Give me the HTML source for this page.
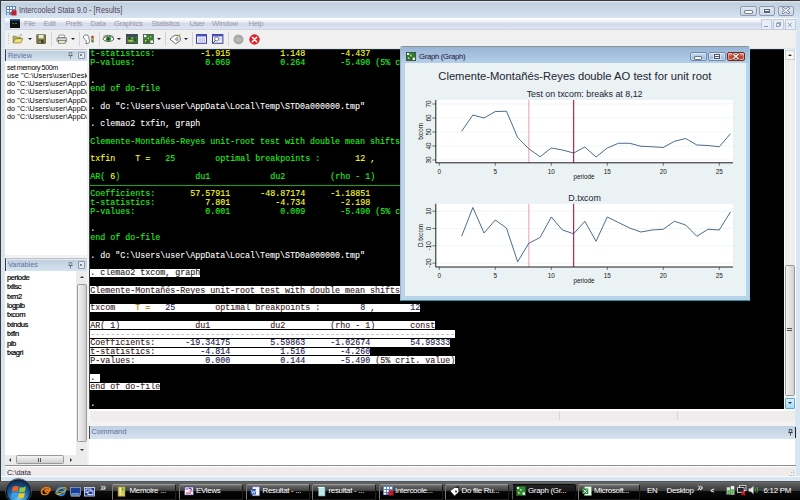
<!DOCTYPE html>
<html lang="en"><head><meta charset="utf-8"><title>Intercooled Stata 9.0 - [Results]</title>
<style>
*{box-sizing:border-box;margin:0;padding:0}
html,body{width:800px;height:500px;overflow:hidden}
body{position:relative;background:#f0f0f0;font-family:"Liberation Sans",sans-serif;font-size:7.5px;color:#000}
.abs{position:absolute}
.t{position:absolute;white-space:pre;line-height:1}
/* main window frame */
#frame{left:0;top:0;width:800px;height:481px;background:#d8e5f3;border-left:1px solid #3c3b3a;border-top:1px solid #3c3b39}
#desk{display:none}
#titlebar{left:1px;top:1px;width:799px;height:16.6px;background:linear-gradient(#dbe6f0 0,#d3dfeb 1px,#c0cfde 2.2px,#d7e3f0 100%)}
#title{left:18.8px;top:7.1px;font-size:8.2px;color:#54435f;transform:scaleX(.9);transform-origin:0 0}
.capbtn{position:absolute;top:6px;height:9.5px;width:16.5px;border:1px solid #8e9db4;border-radius:2px;background:linear-gradient(#dfe6f0,#c9d5e5)}
#menubar{left:5px;top:17.6px;width:791px;height:12.4px;background:linear-gradient(#fff 0,#fff 1.2px,#f5f7fb 1.8px,#e9ecf6 4.3px,#d3d9ec 5.2px,#dfe5f4 11.2px,#c8cddb 11.6px,#c8cddb 100%)}
.menu{position:absolute;top:20.2px;font-size:7.6px;color:#9a98a3;line-height:1;white-space:pre;letter-spacing:-.22px}
.mdibtn{position:absolute;top:18.5px;width:11px;height:11px;border:1px solid #c3cbdb;background:#e8eef7}
#toolbar{left:5px;top:30px;width:791px;height:18px;background:#f0f0f0}
.sep{position:absolute;top:32px;width:1px;height:14px;background:#d4d4d4}
.arr{position:absolute;top:38px;width:0;height:0;border-left:2px solid transparent;border-right:2px solid transparent;border-top:2.2px solid #222}
.phead{position:absolute;left:5px;width:82px;background:linear-gradient(#bccddd,#d6e3f0);border-top:1px solid #c0c0c0;border-left:1px solid #3a3a3a;box-shadow:inset 1px 1px 0 #e4e9f0}
.phead .t{left:2px;font-size:7.3px;color:#6274a0}
.pclose{position:absolute;left:71.5px;width:7px;height:7.5px;border:1px solid #8c97ad;background:#e6edf5;border-radius:1px}
.plist{position:absolute;left:5px;width:82px;background:#fff;overflow:hidden}
.rv{position:absolute;left:2px;font-size:7.2px;line-height:1;white-space:pre;color:#000;letter-spacing:-0.45px}
.vr{position:absolute;left:2px;font-size:7.6px;line-height:1;white-space:pre;color:#000;letter-spacing:-0.45px;-webkit-text-stroke:0.2px #000;margin-top:-.3px}
.sbtrack{position:absolute;background:#ececec}
.sbthumb{position:absolute;border:1px solid #9a9a9a;border-radius:1.5px;background:linear-gradient(90deg,#f4f4f4,#e2e2e2 50%,#cfcfcf)}
.sbthumbh{position:absolute;border:1px solid #9a9a9a;border-radius:1.5px;background:linear-gradient(#f4f4f4,#e2e2e2 50%,#cfcfcf)}
#res{font-family:"Liberation Mono",monospace}
.rl{position:absolute;white-space:pre;font-size:8.33px;line-height:8.75px;height:8.75px}
.cg{color:#22f022;-webkit-text-stroke:.1px #22f022}.cy{color:#ffff2a;-webkit-text-stroke:.1px #ffff2a}.cw{color:#fff;-webkit-text-stroke:.08px #fff}
.ck{color:#1c1c22}.cr{color:#38211c}.co{color:#a67c00}.cb{color:#1d2350}.cd{color:#a8a8a8}
.ck,.cr,.cb,.co{-webkit-text-stroke:.12px currentColor}
.sel{position:absolute;left:0;height:7.9px;background:#fff}
#gwin{left:400px;top:46px;width:350.2px;height:254.6px;background:#b9d3eb;border-left:1px solid #9fb0c4;border-top:1px solid #8e9298;border-right:1.1px solid #8fdcf8;border-bottom:1.1px solid #28909c;border-radius:2.5px 2.5px 0 0}
#gtitle{left:401px;top:47px;width:348px;height:16px;background:linear-gradient(#98b4d4,#b4cfea);border-radius:2px 2px 0 0}
#gcont{left:405px;top:63px;width:341px;height:232.5px;background:#eaf2f3}
.gbtn{position:absolute;top:52px;height:9px;width:17.5px;border:1px solid #7088ac;border-radius:2px;background:linear-gradient(#c9dbee,#b0c9e6 50%,#a0bcdc 55%,#aac5e3);box-shadow:inset 0 0 0 .7px rgba(255,255,255,.55)}
.gclose{background:linear-gradient(#e9a89a,#d4543c 45%,#c03a24 55%,#d8694c);border-color:#6a2a22}
#tb{left:0;top:480.6px;width:800px;height:19.4px;background:linear-gradient(#4c4c4c 0,#666 1.4px,#5a5a5a 3px,#3a3a3a 9.6px,#0c0c0c 10.3px,#000 100%)}
#orb{left:6.3px;top:479.3px;width:25.2px;height:25.2px;border-radius:50%;background:radial-gradient(circle at 50% 88%,#6fd0f4 0,#2f8bc6 30%,#1a4f86 58%,#10294c 85%,#0a1a30 100%);border:1.4px solid #0c1826;box-shadow:0 0 0 .8px #4a5866}
.tbtn{position:absolute;top:483.7px;height:16.6px;border:1px solid #1c1c1c;border-top-color:#999;border-left-color:#7a7a7a;border-radius:2px 2px 0 0;background:linear-gradient(#7a7a7a 0,#626262 1.2px,#3e3e3e 5.8px,#060606 6.6px,#000 100%)}
.tbtn.act{border-color:#0a0a0a;border-left-color:#555;background:linear-gradient(#222 0,#161616 6px,#000 7px,#000 100%)}
.tl{position:absolute;top:487.2px;font-size:7.9px;line-height:1;color:#fff;white-space:pre;letter-spacing:-.28px}
.rv.w{letter-spacing:.12px}
.tri{position:absolute;width:0;height:0}
.tri.u{border-left:2px solid transparent;border-right:2px solid transparent;border-bottom:2.4px solid #333}
.tri.d{border-left:2px solid transparent;border-right:2px solid transparent;border-top:2.4px solid #333}
.tri.l{border-top:2px solid transparent;border-bottom:2px solid transparent;border-right:2.4px solid #333}
.tri.r{border-top:2px solid transparent;border-bottom:2px solid transparent;border-left:2.4px solid #333}

</style></head>
<body>
<div id="desk" class="abs"></div>
<div id="frame" class="abs"></div>
<div id="titlebar" class="abs"></div>
<svg class="abs" style="left:6px;top:6px" width="11" height="10" viewBox="0 0 11 10"><rect x="0" y="0" width="10" height="9" fill="#5f86c4"/><rect x="1" y="1" width="2" height="2" fill="#fff"/><rect x="4" y="1" width="2" height="2" fill="#fff"/><rect x="7" y="1" width="2" height="2" fill="#fff"/><rect x="1" y="4" width="2" height="2" fill="#fff"/><rect x="4" y="4" width="2" height="2" fill="#fff"/><rect x="1" y="7" width="2" height="1.5" fill="#fff"/><rect x="5.5" y="4.5" width="5" height="5" fill="#c0202a"/></svg>
<div id="title" class="t">Intercooled Stata 9.0 - [Results]</div>
<div class="capbtn" style="left:740px"><div class="abs" style="left:4px;top:4.4px;width:6.6px;height:2px;background:#fff;border-radius:.6px;box-shadow:0 0 0 .8px #5a6580"></div></div>
<div class="capbtn" style="left:758.5px"><div class="abs" style="left:4.8px;top:1.5px;width:5.6px;height:4.6px;background:linear-gradient(#fff 0,#fff 1.2px,#565f74 1.2px,#565f74 2.2px,#fff 2.2px);border:.9px solid #565f74;box-shadow:0 0 0 .6px #eef2f8"></div></div>
<div class="capbtn" style="left:777.5px"><svg class="abs" style="left:3.7px;top:0.4px" width="7.6" height="6.8" viewBox="0 0 7.6 6.8"><path d="M1.2 1.2L6.4 5.6M6.4 1.2L1.2 5.6" stroke="#5a6580" stroke-width="2.5" fill="none" stroke-linecap="square"/><path d="M1.2 1.2L6.4 5.6M6.4 1.2L1.2 5.6" stroke="#fbfcfe" stroke-width="1.3" fill="none" stroke-linecap="square"/></svg></div>
<div id="menubar" class="abs"></div>
<svg class="abs" style="left:10px;top:19px" width="10" height="9" viewBox="0 0 10 9"><rect width="10" height="9" fill="#111"/><rect width="10" height="1.6" fill="#2a58c8"/><rect x="2" y="4" width="2" height="1" fill="#2c8a3a"/><rect x="5" y="4" width="2" height="1" fill="#2c8a3a"/></svg>
<div class="menu" style="left:24px">File</div>
<div class="menu" style="left:43.5px">Edit</div>
<div class="menu" style="left:65.5px">Prefs</div>
<div class="menu" style="left:90.5px">Data</div>
<div class="menu" style="left:114px">Graphics</div>
<div class="menu" style="left:151.5px">Statistics</div>
<div class="menu" style="left:189.5px">User</div>
<div class="menu" style="left:212px">Window</div>
<div class="menu" style="left:248.5px">Help</div>
<div class="mdibtn" style="left:760.5px"><div class="abs" style="left:2.5px;top:6px;width:4px;height:1.2px;background:#8d97ab"></div></div>
<div class="mdibtn" style="left:772.5px"><div class="abs" style="left:3px;top:2px;width:4px;height:4px;border:1px solid #9aa3b5;border-top-width:1.5px"></div><div class="abs" style="left:2px;top:3.5px;width:4px;height:4px;border:1px solid #9aa3b5;background:#e8eef7;border-top-width:1.5px"></div></div>
<div class="mdibtn" style="left:784.5px"><svg class="abs" style="left:1.8px;top:2px" width="5.6" height="5.6" viewBox="0 0 5.6 5.6"><path d="M1.2 1.2L4.4 4.4M4.4 1.2L1.2 4.4" stroke="#8b95aa" stroke-width="0.9" fill="none" stroke-linecap="square"/></svg></div>
<div id="toolbar" class="abs"></div>
<!-- toolbar icons -->
<div class="abs" style="left:7.5px;top:33px;width:1.5px;height:11px;background:repeating-linear-gradient(#c2c2c2 0 1.2px,#f0f0f0 1.2px 2.4px)"></div>
<svg class="abs" style="left:12px;top:33px" width="12" height="12" viewBox="0 0 12 12"><path d="M1 3.2h3.2l1 1.1h3.6v1.4H3.2L1.3 9.8z" fill="#c9b94a" stroke="#6b6430" stroke-width=".6"/><path d="M3.2 5.7h7.6L8.9 9.9H1.2z" fill="#f1e36d" stroke="#6b6430" stroke-width=".6"/><path d="M7.4 2.4c1-.9 2.1-.8 2.8.1" fill="none" stroke="#555" stroke-width=".6"/></svg>
<div class="arr" style="left:27.5px"></div>
<svg class="abs" style="left:35.5px;top:34px" width="11" height="11" viewBox="0 0 11 11"><rect x=".8" y=".8" width="8.8" height="8.8" fill="#7d7a36" stroke="#4a4826" stroke-width=".6"/><rect x="2.6" y="1" width="5" height="3.4" fill="#e9e9e4"/><rect x="2.8" y="6" width="4.6" height="3.4" fill="#3f3d22"/><rect x="3.4" y="6.6" width="1.2" height="2.4" fill="#d7d7cf"/></svg>
<div class="sep" style="left:51px"></div>
<svg class="abs" style="left:55.5px;top:33.5px" width="12" height="11" viewBox="0 0 12 11"><path d="M3.2 1h5l1 2.6H2.4z" fill="#fff" stroke="#555" stroke-width=".6"/><rect x="1" y="3.8" width="9.6" height="3.8" rx=".6" fill="#d9d9d9" stroke="#4c4c4c" stroke-width=".6"/><rect x="2.4" y="6.4" width="6.8" height="2.8" fill="#f4f0c0" stroke="#4c4c4c" stroke-width=".6"/></svg>
<div class="arr" style="left:70.5px"></div>
<div class="sep" style="left:78.5px"></div>
<svg class="abs" style="left:82px;top:33.5px" width="13" height="12" viewBox="0 0 13 12"><path d="M3.2 1.2c2.2-.8 3.8.4 3.6 2.4-.2 1.600 1 2.200.6 4.200-.3 1.500-2 2.300-3.700 1.700.9-.7 1-1.800.4-2.800C3.300 5.300 1.600 4.600 1.400 3.200 1.300 2.200 2.100 1.500 3.200 1.200z" fill="#fff" stroke="#444" stroke-width=".7"/><rect x="9.400" y="1.800" width="2.200" height="6.600" rx=".6" fill="#555"/><circle cx="10.500" cy="3" r=".9" fill="#e03a2a"/><circle cx="10.500" cy="5.100" r=".9" fill="#e6c62a"/><circle cx="10.500" cy="7.200" r=".9" fill="#3fae3a"/></svg>
<div class="sep" style="left:98.500px"></div>
<svg class="abs" style="left:102px;top:33.500px" width="13" height="10" viewBox="0 0 13 10"><path d="M.8 5C3 1.400 9.800 1.400 12 5 9.800 8.400 3 8.400.8 5z" fill="#f4f4f4" stroke="#444" stroke-width=".8"/><circle cx="6.400" cy="5" r="2.500" fill="#2d8a2d"/><circle cx="6.400" cy="5" r="1" fill="#0f3d12"/><path d="M1 3.300C3.400.600 9.400.600 11.800 3.300" fill="none" stroke="#444" stroke-width=".7"/></svg>
<div class="arr" style="left:117.400px"></div>
<svg class="abs" style="left:126px;top:34px" width="12" height="10" viewBox="0 0 12 10"><rect x=".4" y=".4" width="11" height="9.200" fill="#3f7a3a" stroke="#333a44" stroke-width=".8"/><rect x=".8" y=".8" width="10.200" height="1.800" fill="#39406a"/><rect x="2.400" y="3.600" width="2.200" height="1.200" fill="#1c2a1c"/><rect x="5.600" y="3.600" width="1.200" height="1.200" fill="#e2d84a"/><rect x="8" y="3.400" width="2.200" height="3.800" fill="#2a5a28"/><rect x="2.400" y="6.200" width="4.800" height="1.400" fill="#d8cf4c"/></svg>
<svg class="abs" style="left:142.500px;top:34px" width="11" height="10" viewBox="0 0 11 10"><rect x=".4" y=".4" width="10" height="9.200" fill="#3c7c38" stroke="#3a4a3a" stroke-width=".7"/><rect x="1" y="1" width="2.400" height="2.200" fill="#f2f2f2"/><rect x="7.400" y="6.400" width="2.600" height="2.600" fill="#f2f2f2"/><rect x="4.600" y="3.600" width="1.400" height="1.400" fill="#e2d84a"/><rect x="2" y="6" width="1.400" height="1.400" fill="#e2d84a"/><rect x="7" y="2" width="1.400" height="1.400" fill="#9bd07a"/><rect x="4.400" y="6.800" width="1.600" height="1.600" fill="#245a22"/></svg>
<div class="arr" style="left:156.500px"></div>
<div class="sep" style="left:164.500px"></div>
<svg class="abs" style="left:168.500px;top:33px" width="13" height="12" viewBox="0 0 13 12"><path d="M1 6.200L5.400 2.400h5.200l.8 5L6.600 10.800z" fill="#fff" stroke="#444" stroke-width=".8"/><path d="M5.600 6.600l4-3.400" stroke="#555" stroke-width=".7"/><path d="M9.400 2.800l1.600-1.600" stroke="#d8c62c" stroke-width="1.200"/><circle cx="8" cy="6.600" r="1.300" fill="#bbb" stroke="#666" stroke-width=".4"/></svg>
<div class="arr" style="left:183.800px"></div>
<div class="sep" style="left:191.500px"></div>
<svg class="abs" style="left:196px;top:34px" width="11" height="10" viewBox="0 0 11 10"><rect x=".5" y=".5" width="10" height="8.800" fill="#f7f7fb" stroke="#3a3f9c" stroke-width="1"/><rect x=".5" y=".5" width="10" height="2" fill="#4a55c8"/><path d="M3 3.500v4.600M4.800 3.500v4.600M6.600 3.500v4.600M8.400 3.500v4.600" stroke="#8f97d8" stroke-width=".7"/></svg>
<svg class="abs" style="left:212px;top:34px" width="11.500" height="10" viewBox="0 0 11.500 10"><rect x=".5" y=".5" width="10.400" height="8.800" fill="#f7f7fb" stroke="#3a3f9c" stroke-width="1"/><rect x=".5" y=".5" width="10.400" height="2" fill="#4a55c8"/><circle cx="4.600" cy="5" r="2" fill="#fff" stroke="#444" stroke-width=".7"/><path d="M3.200 6.600L1.400 8.600" stroke="#333" stroke-width="1"/><path d="M7.200 4.400h2.600M7.200 6h2.600" stroke="#8f97d8" stroke-width=".6"/></svg>
<div class="sep" style="left:227.500px"></div>
<svg class="abs" style="left:232.500px;top:33.500px" width="11" height="11" viewBox="0 0 11 11"><circle cx="5.500" cy="5.500" r="5" fill="#a9a9a9"/><circle cx="4.600" cy="5.500" r="1.300" fill="none" stroke="#c9c9c9" stroke-width=".7"/><circle cx="6.600" cy="5.500" r="1.300" fill="none" stroke="#c9c9c9" stroke-width=".7"/></svg>
<svg class="abs" style="left:248.700px;top:33.500px" width="11" height="11" viewBox="0 0 11 11"><circle cx="5.500" cy="5.500" r="5" fill="#e8242c"/><circle cx="5.500" cy="5.500" r="4.700" fill="none" stroke="#b01018" stroke-width=".5"/><path d="M3.300 3.300l4.400 4.400M7.700 3.300l-4.400 4.400" stroke="#fff" stroke-width="1.500" stroke-linecap="round"/></svg>
<!-- Review panel -->
<div class="abs" style="left:5px;top:48px;width:84px;height:417px;background:#f0f2f5"></div>
<div class="phead" style="top:49px;height:12.3px"><div class="t" style="top:2px">Review</div>
<svg class="abs" style="left:62px;top:2px" width="5" height="7" viewBox="0 0 5 7"><path d="M1.200.5h2.600v3H1.200zM.3 3.600h4.400M2.500 3.600v3" fill="none" stroke="#555" stroke-width=".6"/></svg>
<div class="pclose" style="top:1.500px"><svg class="abs" style="left:0.6px;top:0.8px" width="4" height="4" viewBox="0 0 4 4"><path d="M1.2 1.2L2.8 2.8M2.8 1.2L1.2 2.8" stroke="#555" stroke-width="0.7" fill="none" stroke-linecap="square"/></svg></div></div>
<div class="plist" style="top:61px;height:193.500px">
<div class="rv" style="top:3.1px">set memory 500m</div>
<div class="rv w" style="top:11.2px">use "C:\Users\user\Desktop\memoire\data.dta", clear</div>
<div class="rv w" style="top:19.3px">do "C:\Users\user\AppData\Local\Temp\STD0a000000.tmp"</div>
<div class="rv w" style="top:27.4px">do "C:\Users\user\AppData\Local\Temp\STD0a000000.tmp"</div>
<div class="rv w" style="top:35.5px">do "C:\Users\user\AppData\Local\Temp\STD0a000000.tmp"</div>
<div class="rv w" style="top:43.6px">do "C:\Users\user\AppData\Local\Temp\STD0a000000.tmp"</div>
<div class="rv w" style="top:51.7px">do "C:\Users\user\AppData\Local\Temp\STD0a000000.tmp"</div>
</div>
<!-- Variables panel -->
<div class="phead" style="top:258.3px;height:12.7px"><div class="t" style="top:2.1px">Variables</div>
<svg class="abs" style="left:62px;top:2.500px" width="5" height="7" viewBox="0 0 5 7"><path d="M1.200.5h2.600v3H1.200zM.3 3.600h4.400M2.500 3.600v3" fill="none" stroke="#555" stroke-width=".6"/></svg>
<div class="pclose" style="top:2px"><svg class="abs" style="left:0.6px;top:0.8px" width="4" height="4" viewBox="0 0 4 4"><path d="M1.2 1.2L2.8 2.8M2.8 1.2L1.2 2.8" stroke="#555" stroke-width="0.7" fill="none" stroke-linecap="square"/></svg></div></div>
<div class="plist" style="top:271px;height:194px">
<div class="vr" style="top:3.2px">periode</div>
<div class="vr" style="top:12.6px">txlisc</div>
<div class="vr" style="top:22.0px">txm2</div>
<div class="vr" style="top:31.3px">logpib</div>
<div class="vr" style="top:40.7px">txcom</div>
<div class="vr" style="top:50.1px">txindus</div>
<div class="vr" style="top:59.5px">txfin</div>
<div class="vr" style="top:68.8px">pib</div>
<div class="vr" style="top:78.2px">txagri</div>
</div>
<!-- variables v-scrollbar -->
<div class="sbtrack" style="left:76px;top:271px;width:11px;height:184px"></div>
<div class="tri u" style="left:79.5px;top:276px"></div>
<div class="sbthumb" style="left:76.500px;top:284px;width:10px;height:158px"></div>
<div class="tri d" style="left:79.5px;top:448.5px"></div>
<!-- variables h-scrollbar -->
<div class="sbtrack" style="left:5px;top:455px;width:82px;height:9.500px"></div>
<div class="tri l" style="left:9px;top:457.7px"></div>
<div class="sbthumbh" style="left:16px;top:455px;width:47.500px;height:9.2px"><div class="abs" style="left:21px;top:2.4px;width:4.500px;height:3.500px;background:repeating-linear-gradient(90deg,#555 0 .8px,transparent .8px 1.800px)"></div></div>
<div class="tri r" style="left:69.5px;top:457.7px"></div>
<!-- Results pane -->
<div class="abs" style="left:89px;top:48.5px;width:695px;height:360.5px;background:#000;border-left:1px solid #3a3a3a;border-top:1px solid #2a2a2a"></div>
<div id="res" class="abs" style="left:90.2px;top:50.4px;width:694px;height:360px;overflow:hidden">
<div class="rl cg" style="left:0px;top:0.00px">t-statistics:</div>
<div class="rl cy" style="left:110px;top:0.00px">-1.915</div>
<div class="rl cy" style="left:190px;top:0.00px">1.148</div>
<div class="rl cy" style="left:250px;top:0.00px">-4.437</div>
<div class="rl cg" style="left:0px;top:8.75px">P-values:</div>
<div class="rl cg" style="left:115px;top:8.75px">0.069</div>
<div class="rl cg" style="left:190px;top:8.75px">0.264</div>
<div class="rl cg" style="left:250px;top:8.75px">-5.490</div>
<div class="rl cg" style="left:280px;top:8.75px"> (5% crit. value)</div>
<div class="rl cw" style="left:0px;top:26.25px">.</div>
<div class="rl cg" style="left:0px;top:35.00px">end of do-file</div>
<div class="rl cw" style="left:0px;top:52.50px">. do "C:\Users\user\AppData\Local\Temp\STD0a000000.tmp"</div>
<div class="rl cw" style="left:0px;top:70.00px">. clemao2 txfin, graph</div>
<div class="rl cg" style="left:0px;top:87.50px">Clemente-Montañés-Reyes unit-root test with double mean shifts, AO model</div>
<div class="rl cy" style="left:0px;top:105.00px">txfin</div>
<div class="rl cy" style="left:45px;top:105.00px">T =</div>
<div class="rl cg" style="left:75px;top:105.00px">25</div>
<div class="rl cg" style="left:125px;top:105.00px">optimal breakpoints :</div>
<div class="rl cy" style="left:265px;top:105.00px">12</div>
<div class="rl cy" style="left:280px;top:105.00px">,</div>
<div class="rl cy" style="left:320px;top:105.00px">16</div>
<div class="rl cg" style="left:0px;top:122.50px">AR(</div>
<div class="rl cy" style="left:20px;top:122.50px">6</div>
<div class="rl cg" style="left:25px;top:122.50px">)</div>
<div class="rl cg" style="left:105px;top:122.50px">du1</div>
<div class="rl cg" style="left:180px;top:122.50px">du2</div>
<div class="rl cg" style="left:240px;top:122.50px">(rho - 1)</div>
<div class="rl cg" style="left:320px;top:122.50px">const</div>
<div class="rl cg" style="left:0px;top:140.00px">Coefficients:</div>
<div class="rl cy" style="left:100px;top:140.00px">57.57911</div>
<div class="rl cy" style="left:170px;top:140.00px">-48.87174</div>
<div class="rl cy" style="left:240px;top:140.00px">-1.18851</div>
<div class="rl cy" style="left:320px;top:140.00px">38.10284</div>
<div class="rl cg" style="left:0px;top:148.75px">t-statistics:</div>
<div class="rl cy" style="left:115px;top:148.75px">7.801</div>
<div class="rl cy" style="left:185px;top:148.75px">-4.734</div>
<div class="rl cy" style="left:250px;top:148.75px">-2.198</div>
<div class="rl cg" style="left:0px;top:157.50px">P-values:</div>
<div class="rl cg" style="left:115px;top:157.50px">0.001</div>
<div class="rl cg" style="left:190px;top:157.50px">0.009</div>
<div class="rl cg" style="left:250px;top:157.50px">-5.490</div>
<div class="rl cg" style="left:280px;top:157.50px"> (5% crit. value)</div>
<div class="rl cw" style="left:0px;top:175.00px">.</div>
<div class="rl cg" style="left:0px;top:183.75px">end of do-file</div>
<div class="rl cw" style="left:0px;top:201.25px">. do "C:\Users\user\AppData\Local\Temp\STD0a000000.tmp"</div>
<div class="abs" style="left:0;top:134.85px;width:365px;height:.7px;background:#12a812"></div>
<div class="sel" style="top:218.40px;width:110px"></div>
<div class="rl ck" style="left:0px;top:218.75px">. clemao2 txcom, graph</div>
<div class="sel" style="top:235.90px;width:360px"></div>
<div class="rl cr" style="left:0px;top:236.25px">Clemente-Montañés-Reyes unit-root test with double mean shifts, AO model</div>
<div class="sel" style="top:253.40px;width:330px"></div>
<div class="rl cr" style="left:0px;top:253.75px">txcom</div>
<div class="rl co" style="left:45px;top:253.75px">T =</div>
<div class="rl cb" style="left:75px;top:253.75px">25</div>
<div class="rl cr" style="left:125px;top:253.75px">optimal breakpoints :</div>
<div class="rl cb" style="left:270px;top:253.75px">8</div>
<div class="rl cb" style="left:280px;top:253.75px">,</div>
<div class="rl cb" style="left:320px;top:253.75px">12</div>
<div class="sel" style="top:270.90px;width:345px"></div>
<div class="rl cr" style="left:0px;top:271.25px">AR(</div>
<div class="rl cb" style="left:20px;top:271.25px">1</div>
<div class="rl cr" style="left:25px;top:271.25px">)</div>
<div class="rl cr" style="left:105px;top:271.25px">du1</div>
<div class="rl cr" style="left:180px;top:271.25px">du2</div>
<div class="rl cr" style="left:240px;top:271.25px">(rho - 1)</div>
<div class="rl cr" style="left:320px;top:271.25px">const</div>
<div class="sel" style="top:288.40px;width:360px"></div>
<div class="rl cr" style="left:0px;top:288.75px">Coefficients:</div>
<div class="rl cb" style="left:95px;top:288.75px">-19.34175</div>
<div class="rl cb" style="left:180px;top:288.75px">5.59863</div>
<div class="rl cb" style="left:240px;top:288.75px">-1.02674</div>
<div class="rl cb" style="left:320px;top:288.75px">54.99333</div>
<div class="sel" style="top:297.15px;width:280px"></div>
<div class="rl cr" style="left:0px;top:297.50px">t-statistics:</div>
<div class="rl cb" style="left:110px;top:297.50px">-4.814</div>
<div class="rl cb" style="left:190px;top:297.50px">1.516</div>
<div class="rl cb" style="left:250px;top:297.50px">-4.260</div>
<div class="sel" style="top:305.90px;width:365px"></div>
<div class="rl cr" style="left:0px;top:306.25px">P-values:</div>
<div class="rl cb" style="left:115px;top:306.25px">0.000</div>
<div class="rl cb" style="left:190px;top:306.25px">0.144</div>
<div class="rl cb" style="left:250px;top:306.25px">-5.490</div>
<div class="rl cr" style="left:280px;top:306.25px"> (5% crit. value)</div>
<div class="sel" style="top:323.40px;width:10px"></div>
<div class="rl ck" style="left:0px;top:323.75px">.</div>
<div class="sel" style="top:332.15px;width:70px"></div>
<div class="rl cr" style="left:0px;top:332.50px">end of do-file</div>
<div class="sel" style="top:279.65px;width:365px"></div>
<div class="rl cd" style="left:0;top:280.80px">-------------------------------------------------------------------------</div>
<div class="rl cw" style="left:0;top:350.00px">.</div>
</div>
<div class="sbtrack" style="left:784px;top:49px;width:12px;height:360px;background:linear-gradient(90deg,#fff 0,#fff 1px,#e9e9e9 1.3px,#f0f0f0 5px,#f0f0f0 9px,#e4e4e4 10.4px,#fff 10.8px,#fff 12px)"></div>
<div class="abs" style="left:784.5px;top:49.5px;width:10px;height:10px;border:1px solid #d0d0d0;background:#f4f4f4"></div>
<div class="tri u" style="left:787.5px;top:53.5px"></div>
<div class="sbthumb" style="left:784.5px;top:264.5px;width:10px;height:131px"></div>
<div class="abs" style="left:787px;top:328px;width:4.5px;height:4px;background:repeating-linear-gradient(#555 0 .8px,transparent .8px 1.8px)"></div>
<div class="abs" style="left:784.5px;top:397.5px;width:10px;height:11px;border:1px solid #5fa8d8;background:linear-gradient(#d9effc,#a9daf5);border-radius:1px"></div>
<div class="tri d" style="left:787.5px;top:402.3px"></div>
<!-- Graph window -->
<div id="gwin" class="abs"></div>
<div id="gtitle" class="abs"></div>
<svg class="abs" style="left:406px;top:51.5px" width="10" height="9" viewBox="0 0 10 9"><rect x=".3" y=".3" width="9.4" height="8.4" fill="#2f7a35" stroke="#2a3a2a" stroke-width=".6"/><rect x="1" y="1" width="2.2" height="2" fill="#f2f2f2"/><rect x="6.6" y="5.6" width="2.4" height="2.4" fill="#f2f2f2"/><rect x="4" y="2.6" width="1.8" height="1.8" fill="#9bd07a"/><rect x="2" y="5.4" width="1.6" height="1.6" fill="#e2d84a"/><rect x="4.400" y="5.800" width="1.400" height="1.400" fill="#173f18"/></svg>
<div class="t" style="left:419px;top:53.2px;font-size:7.7px;letter-spacing:-.28px;color:#1a1038">Graph (Graph)</div>
<div class="gbtn" style="left:689.5px"><div class="abs" style="left:4.3px;top:4px;width:6.4px;height:2px;background:#fff;border-radius:.6px;box-shadow:0 0 0 .8px #4c5872"></div></div>
<div class="gbtn" style="left:708px"><div class="abs" style="left:5.2px;top:1.3px;width:5.6px;height:4.6px;background:linear-gradient(#fff 0,#fff 1.2px,#4a5570 1.2px,#4a5570 2.2px,#fff 2.2px);border:.9px solid #4a5570;box-shadow:0 0 0 .6px #e8eef6"></div></div>
<div class="gbtn gclose" style="left:727px"><svg class="abs" style="left:4.2px;top:0.2px" width="7.6" height="6.8" viewBox="0 0 7.6 6.8"><path d="M1.2 1.2L6.4 5.6M6.4 1.2L1.2 5.6" stroke="#6a2018" stroke-width="2.5" fill="none" stroke-linecap="square"/><path d="M1.2 1.2L6.4 5.6M6.4 1.2L1.2 5.6" stroke="#ffffff" stroke-width="1.3" fill="none" stroke-linecap="square"/></svg></div>
<div id="gcont" class="abs"></div>
<svg class="abs" style="left:405px;top:63px" width="341" height="232.5" viewBox="0 0 341 232.5" font-family="Liberation Sans, sans-serif">
<text x="169.8" y="16.6" font-size="11.3" text-anchor="middle" fill="#1c2434" textLength="273" lengthAdjust="spacingAndGlyphs">Clemente-Montañés-Reyes double AO test for unit root</text>
<rect x="30.50" y="37.00" width="297.50" height="62.80" fill="#fff"/>
<line x1="30.50" x2="328.00" y1="41.00" y2="41.00" stroke="#e9f0f2" stroke-width=".7"/>
<line x1="30.50" x2="328.00" y1="55.00" y2="55.00" stroke="#e9f0f2" stroke-width=".7"/>
<line x1="30.50" x2="328.00" y1="69.00" y2="69.00" stroke="#e9f0f2" stroke-width=".7"/>
<line x1="30.50" x2="328.00" y1="83.00" y2="83.00" stroke="#e9f0f2" stroke-width=".7"/>
<line x1="30.50" x2="328.00" y1="97.00" y2="97.00" stroke="#e9f0f2" stroke-width=".7"/>
<line x1="123.85" x2="123.85" y1="37.00" y2="99.80" stroke="#eda6b8" stroke-width="1.1"/>
<line x1="168.65" x2="168.65" y1="37.00" y2="99.80" stroke="#b3123a" stroke-width="1.1"/>
<polyline points="56.65,68.25 67.85,52.00 79.05,55.00 90.25,48.50 101.45,48.25 112.65,74.50 123.85,85.75 135.05,93.75 146.25,85.00 157.45,87.00 168.65,90.00 179.85,84.00 191.05,94.00 202.25,85.00 213.45,80.25 224.65,80.25 235.85,83.25 247.05,83.75 258.25,84.50 269.45,78.25 280.65,75.50 291.85,82.00 303.05,82.50 314.25,83.75 325.45,70.75" fill="none" stroke="#1f4670" stroke-width=".8" stroke-linejoin="round"/>
<path d="M30.80 37.00V99.80H328.00" fill="none" stroke="#111" stroke-width=".95"/>
<line x1="27.30" x2="30.80" y1="41.00" y2="41.00" stroke="#222" stroke-width=".6"/>
<text transform="translate(26.20 41.00) rotate(-90)" font-size="6.4" text-anchor="middle" fill="#222">70</text>
<line x1="27.30" x2="30.80" y1="55.00" y2="55.00" stroke="#222" stroke-width=".6"/>
<text transform="translate(26.20 55.00) rotate(-90)" font-size="6.4" text-anchor="middle" fill="#222">60</text>
<line x1="27.30" x2="30.80" y1="69.00" y2="69.00" stroke="#222" stroke-width=".6"/>
<text transform="translate(26.20 69.00) rotate(-90)" font-size="6.4" text-anchor="middle" fill="#222">50</text>
<line x1="27.30" x2="30.80" y1="83.00" y2="83.00" stroke="#222" stroke-width=".6"/>
<text transform="translate(26.20 83.00) rotate(-90)" font-size="6.4" text-anchor="middle" fill="#222">40</text>
<line x1="27.30" x2="30.80" y1="97.00" y2="97.00" stroke="#222" stroke-width=".6"/>
<text transform="translate(26.20 97.00) rotate(-90)" font-size="6.4" text-anchor="middle" fill="#222">30</text>
<line x1="34.25" x2="34.25" y1="99.80" y2="102.80" stroke="#222" stroke-width=".6"/>
<text x="34.25" y="111.00" font-size="6.4" text-anchor="middle" fill="#222">0</text>
<line x1="90.25" x2="90.25" y1="99.80" y2="102.80" stroke="#222" stroke-width=".6"/>
<text x="90.25" y="111.00" font-size="6.4" text-anchor="middle" fill="#222">5</text>
<line x1="146.25" x2="146.25" y1="99.80" y2="102.80" stroke="#222" stroke-width=".6"/>
<text x="146.25" y="111.00" font-size="6.4" text-anchor="middle" fill="#222">10</text>
<line x1="202.25" x2="202.25" y1="99.80" y2="102.80" stroke="#222" stroke-width=".6"/>
<text x="202.25" y="111.00" font-size="6.4" text-anchor="middle" fill="#222">15</text>
<line x1="258.25" x2="258.25" y1="99.80" y2="102.80" stroke="#222" stroke-width=".6"/>
<text x="258.25" y="111.00" font-size="6.4" text-anchor="middle" fill="#222">20</text>
<line x1="314.25" x2="314.25" y1="99.80" y2="102.80" stroke="#222" stroke-width=".6"/>
<text x="314.25" y="111.00" font-size="6.4" text-anchor="middle" fill="#222">25</text>
<text x="179.00" y="115.50" font-size="6.3" text-anchor="middle" fill="#111">periode</text>
<text transform="translate(17.80 68.40) rotate(-90)" font-size="6.3" text-anchor="middle" fill="#111">txcom</text>
<text x="179.60" y="33.50" font-size="8.9" text-anchor="middle" fill="#1c2434">Test on txcom: breaks at 8,12</text>
<rect x="30.50" y="140.75" width="297.50" height="63.25" fill="#fff"/>
<line x1="30.50" x2="328.00" y1="148.20" y2="148.20" stroke="#e9f0f2" stroke-width=".7"/>
<line x1="30.50" x2="328.00" y1="165.50" y2="165.50" stroke="#e9f0f2" stroke-width=".7"/>
<line x1="30.50" x2="328.00" y1="182.80" y2="182.80" stroke="#e9f0f2" stroke-width=".7"/>
<line x1="30.50" x2="328.00" y1="200.10" y2="200.10" stroke="#e9f0f2" stroke-width=".7"/>
<line x1="123.85" x2="123.85" y1="140.75" y2="204.00" stroke="#eda6b8" stroke-width="1.1"/>
<line x1="168.65" x2="168.65" y1="140.75" y2="204.00" stroke="#b3123a" stroke-width="1.1"/>
<polyline points="56.65,173.25 67.85,144.50 79.05,170.00 90.25,157.00 101.45,165.00 112.65,198.75 123.85,180.25 135.05,174.50 146.25,154.00 157.45,167.00 168.65,170.75 179.85,158.25 191.05,178.25 202.25,154.00 213.45,159.50 224.65,165.00 235.85,169.00 247.05,167.00 258.25,166.25 269.45,158.25 280.65,162.00 291.85,173.25 303.05,166.25 314.25,167.00 325.45,149.00" fill="none" stroke="#1f4670" stroke-width=".8" stroke-linejoin="round"/>
<path d="M30.80 140.75V204.00H328.00" fill="none" stroke="#111" stroke-width=".95"/>
<line x1="27.30" x2="30.80" y1="148.20" y2="148.20" stroke="#222" stroke-width=".6"/>
<text transform="translate(26.20 148.20) rotate(-90)" font-size="6.4" text-anchor="middle" fill="#222">10</text>
<line x1="27.30" x2="30.80" y1="165.50" y2="165.50" stroke="#222" stroke-width=".6"/>
<text transform="translate(26.20 165.50) rotate(-90)" font-size="6.4" text-anchor="middle" fill="#222">0</text>
<line x1="27.30" x2="30.80" y1="182.80" y2="182.80" stroke="#222" stroke-width=".6"/>
<text transform="translate(26.20 182.80) rotate(-90)" font-size="6.4" text-anchor="middle" fill="#222">-10</text>
<line x1="27.30" x2="30.80" y1="200.10" y2="200.10" stroke="#222" stroke-width=".6"/>
<text transform="translate(26.20 200.10) rotate(-90)" font-size="6.4" text-anchor="middle" fill="#222">-20</text>
<line x1="34.25" x2="34.25" y1="204.00" y2="207.00" stroke="#222" stroke-width=".6"/>
<text x="34.25" y="215.20" font-size="6.4" text-anchor="middle" fill="#222">0</text>
<line x1="90.25" x2="90.25" y1="204.00" y2="207.00" stroke="#222" stroke-width=".6"/>
<text x="90.25" y="215.20" font-size="6.4" text-anchor="middle" fill="#222">5</text>
<line x1="146.25" x2="146.25" y1="204.00" y2="207.00" stroke="#222" stroke-width=".6"/>
<text x="146.25" y="215.20" font-size="6.4" text-anchor="middle" fill="#222">10</text>
<line x1="202.25" x2="202.25" y1="204.00" y2="207.00" stroke="#222" stroke-width=".6"/>
<text x="202.25" y="215.20" font-size="6.4" text-anchor="middle" fill="#222">15</text>
<line x1="258.25" x2="258.25" y1="204.00" y2="207.00" stroke="#222" stroke-width=".6"/>
<text x="258.25" y="215.20" font-size="6.4" text-anchor="middle" fill="#222">20</text>
<line x1="314.25" x2="314.25" y1="204.00" y2="207.00" stroke="#222" stroke-width=".6"/>
<text x="314.25" y="215.20" font-size="6.4" text-anchor="middle" fill="#222">25</text>
<text x="179.00" y="219.70" font-size="6.3" text-anchor="middle" fill="#111">periode</text>
<text transform="translate(17.80 172.38) rotate(-90)" font-size="6.3" text-anchor="middle" fill="#111">D.txcom</text>
<text x="179.60" y="138.05" font-size="8.9" text-anchor="middle" fill="#1c2434">D.txcom</text>
</svg>
<!-- results status strip -->
<div class="abs" style="left:89px;top:409.3px;width:706px;height:12px;background:#fdfdfd"></div>
<div class="abs" style="left:90px;top:411.4px;width:705px;height:9.8px;background:#f0eceb"></div>
<div class="abs" style="left:559px;top:411px;width:1px;height:9px;background:#d9d6d6"></div>
<div class="abs" style="left:677px;top:411px;width:1px;height:9px;background:#d9d6d6"></div>
<div class="abs" style="left:89px;top:421px;width:706px;height:5px;background:#f3f3f3"></div>
<!-- command pane -->
<div class="abs" style="left:89px;top:426px;width:706px;height:12.500px;background:linear-gradient(#c0d0e0,#d6e3f0);border-left:1px solid #4a4a4a"></div>
<div class="t" style="left:91.500px;top:428.400px;font-size:7.600px;color:#5f6f98">Command</div>
<svg class="abs" style="left:788px;top:428.500px" width="5" height="7" viewBox="0 0 5 7"><path d="M1.200.5h2.600v3H1.200zM.3 3.600h4.400M2.500 3.600v3" fill="none" stroke="#333" stroke-width=".8"/></svg>
<div class="abs" style="left:794.500px;top:427px;width:1px;height:11px;background:#222"></div>
<div class="abs" style="left:89px;top:438.500px;width:706px;height:26.500px;background:#fff"></div>
<!-- main status bar -->
<div class="abs" style="left:5px;top:464.7px;width:791px;height:1.1px;background:#8c8c8c"></div>
<div class="abs" style="left:5px;top:465.800px;width:791px;height:10.4px;background:linear-gradient(#fff 0,#fff .6px,#f0eceb .8px)"></div>
<div class="t" style="left:7px;top:469px;font-size:7.400px;color:#2a1c3c">C:\data</div>
<div class="abs" style="left:793px;top:474.5px;width:1.2px;height:1.2px;background:#b4b4b4"></div><div class="abs" style="left:790.8px;top:474.5px;width:1.2px;height:1.2px;background:#b4b4b4"></div><div class="abs" style="left:788.6px;top:474.5px;width:1.2px;height:1.2px;background:#b4b4b4"></div><div class="abs" style="left:793px;top:472.3px;width:1.2px;height:1.2px;background:#b4b4b4"></div><div class="abs" style="left:790.8px;top:472.3px;width:1.2px;height:1.2px;background:#b4b4b4"></div><div class="abs" style="left:793px;top:470.1px;width:1.2px;height:1.2px;background:#b4b4b4"></div>
<div class="abs" style="left:1px;top:476.2px;width:799px;height:.8px;background:#fbfbfc"></div>
<!-- taskbar -->
<div id="tb" class="abs"></div>
<div id="orb" class="abs"><svg class="abs" style="left:3.5px;top:4px" width="17" height="16" viewBox="0 0 17 16"><path d="M1.5 3.2Q4.5 1.2 7.6 2.6L6.8 7.6Q3.8 6.300 .9 8z" fill="#f0602a"/><path d="M8.800 2.900Q11.800 4.300 15 2.200L14 7.200Q11 9 8 7.800z" fill="#8ecb3c"/><path d="M.7 9.200Q3.600 7.500 6.600 8.800L5.800 13.600Q3 12.400 0 14z" fill="#3aa0ea"/><path d="M7.800 9Q10.800 10.300 13.800 8.400L13 13.300Q10 15 7 13.800z" fill="#f6c62c"/></svg></div>
<svg class="abs" style="left:40px;top:485px" width="12" height="12" viewBox="0 0 12 12"><path d="M2 8.500c-1.500-2.500 1-6 4.500-6s4.500 2.500 2.500 4-4.500.5-3.500-1 3-1 2.500 0" fill="none" stroke="#f07a10" stroke-width="1.700" stroke-linecap="round"/><path d="M2 9c2 1.200 5 .6 6.500-1" fill="none" stroke="#f0a020" stroke-width="1.200"/></svg>
<svg class="abs" style="left:55px;top:485px" width="12" height="12" viewBox="0 0 12 12"><circle cx="6" cy="6.500" r="3.800" fill="none" stroke="#2a8ae0" stroke-width="2"/><path d="M2.500 6.600h7" stroke="#2a8ae0" stroke-width="1.400"/><ellipse cx="6" cy="5.800" rx="5.600" ry="2.200" fill="none" stroke="#f0b020" stroke-width=".9" transform="rotate(-28 6 6)"/></svg>
<svg class="abs" style="left:69.500px;top:486.500px" width="11" height="10" viewBox="0 0 11 10"><rect x=".5" y=".5" width="10" height="7.500" fill="#1d3f94" stroke="#8aa0cc" stroke-width=".8"/><rect x="1.500" y="6" width="8" height="1.500" fill="#6a9ae0"/><rect x="1" y="8.500" width="9" height="1" fill="#ccd"/></svg>
<svg class="abs" style="left:84px;top:486.500px" width="11" height="10" viewBox="0 0 11 10"><rect x=".5" y=".5" width="10" height="8.500" fill="#1a3a9a" stroke="#c8d4f0" stroke-width=".9"/><rect x="2" y="2" width="5" height="3.500" fill="none" stroke="#fff" stroke-width=".8"/><rect x="4" y="4" width="5" height="3.500" fill="#1a3a9a" stroke="#fff" stroke-width=".8"/></svg>
<div class="t" style="left:100.3px;top:482.2px;font-size:10.5px;color:#fff">»</div>
<div class="tbtn" style="left:112px;width:64px"></div>
<div class="tbtn" style="left:179px;width:64px"></div>
<div class="tbtn" style="left:245.500px;width:64px"></div>
<div class="tbtn" style="left:312px;width:64px"></div>
<div class="tbtn" style="left:378.500px;width:64px"></div>
<div class="tbtn" style="left:445px;width:64px"></div>
<div class="tbtn act" style="left:511.500px;width:64px"></div>
<div class="tbtn" style="left:578px;width:62px"></div>
<!-- task icons -->
<svg class="abs" style="left:117px;top:486px" width="9" height="11" viewBox="0 0 9 11"><rect x="1" y=".8" width="7" height="9.500" fill="#d8c860" stroke="#8a7a2a" stroke-width=".6"/><path d="M5 1l2 3-2 .5z" fill="#3aa03a"/><rect x="2.500" y="2" width="1.500" height="7" fill="#f0e898"/></svg>
<svg class="abs" style="left:184px;top:486px" width="10" height="11" viewBox="0 0 10 11"><rect x=".5" y="1" width="9" height="8" fill="#f4f4fa" stroke="#3a3a7a" stroke-width=".7"/><path d="M1.500 3h3M5.500 5h3M2 7h5" stroke="#c02a6a" stroke-width="1.200"/><path d="M5 2l3 1.500" stroke="#2a3ab0" stroke-width="1.200"/></svg>
<svg class="abs" style="left:250px;top:486px" width="10" height="11" viewBox="0 0 10 11"><rect x="2.500" y=".8" width="7" height="9" fill="#f2f4fa" stroke="#6a7aa8" stroke-width=".6"/><rect x=".5" y="3" width="5.500" height="5.500" fill="#2a5ab8"/><path d="M1.500 4.200l1 3.200 1-2.400 1 2.400 1-3.200" fill="none" stroke="#fff" stroke-width=".7"/></svg>
<svg class="abs" style="left:317px;top:486px" width="9" height="11" viewBox="0 0 9 11"><path d="M1.500 1h5.500l1 1v8H1.500z" fill="#bfe6ea" stroke="#6a9aa0" stroke-width=".6"/><path d="M1 1.500h6.500" stroke="#e8f8fa" stroke-width="1"/></svg>
<svg class="abs" style="left:383px;top:486px" width="11" height="10" viewBox="0 0 11 10"><rect x="0" y="0" width="10" height="9" fill="#5f86c4"/><rect x="1" y="1" width="2" height="2" fill="#fff"/><rect x="4" y="1" width="2" height="2" fill="#fff"/><rect x="7" y="1" width="2" height="2" fill="#fff"/><rect x="1" y="4" width="2" height="2" fill="#fff"/><rect x="4" y="4" width="2" height="2" fill="#fff"/><rect x="1" y="7" width="2" height="1.500" fill="#fff"/><rect x="5.500" y="4.500" width="5" height="5" fill="#c0202a"/></svg>
<svg class="abs" style="left:449px;top:485.500px" width="11" height="11" viewBox="0 0 11 11"><path d="M1 5L5.500 1.500h4l.5 4.500L5.500 10z" fill="#fff" stroke="#222" stroke-width=".8"/><path d="M7 1l2-1 1 2" fill="#111"/><circle cx="7" cy="5.500" r="1" fill="#333"/></svg>
<svg class="abs" style="left:516px;top:486px" width="10" height="10" viewBox="0 0 10 10"><rect x=".3" y=".3" width="9.400" height="9.400" fill="#2f8a35" stroke="#1a4a1a" stroke-width=".6"/><rect x="1" y="1" width="2.200" height="2" fill="#f2f2f2"/><rect x="6.600" y="6.400" width="2.400" height="2.400" fill="#f2f2f2"/><rect x="4" y="3" width="1.800" height="1.800" fill="#9bd07a"/><rect x="2" y="6" width="1.600" height="1.600" fill="#e2d84a"/></svg>
<svg class="abs" style="left:582px;top:486px" width="10" height="10" viewBox="0 0 10 10"><rect x="2.500" y=".5" width="7" height="9" fill="#f2f8f2" stroke="#5a9a5a" stroke-width=".6"/><rect x=".3" y="2.500" width="6" height="5.500" fill="#2a8a3a"/><path d="M1.500 3.500l3.500 3.500M5 3.500L1.500 7" stroke="#fff" stroke-width=".9"/></svg>
<div class="tl" style="left:129.500px">Memoire ...</div>
<div class="tl" style="left:196px">EViews</div>
<div class="tl" style="left:262.500px">Resultat - ...</div>
<div class="tl" style="left:328.500px">resultat - ...</div>
<div class="tl" style="left:395px">Intercoole...</div>
<div class="tl" style="left:461.500px">Do file Ru...</div>
<div class="tl" style="left:528px">Graph (Gr...</div>
<div class="tl" style="left:594px">Microsoft...</div>
<div class="tl" style="left:647px">EN</div>
<div class="tl" style="left:666.500px">Desktop</div>
<div class="t" style="left:697.3px;top:482.2px;font-size:10.5px;color:#fff">»</div>
<div class="t" style="left:710px;top:487px;font-size:8px;color:#fff;font-weight:bold;transform:scaleX(.8)">&lt;</div>
<svg class="abs" style="left:726px;top:484.500px" width="9" height="11" viewBox="0 0 9 11"><rect x=".5" y="2" width="4" height="7.500" fill="#d8e0d8" stroke="#555" stroke-width=".6"/><rect x="4.500" y=".8" width="4" height="9" fill="#f4f4f4" stroke="#555" stroke-width=".6"/><rect x="5.300" y="4" width="2.400" height="5" fill="#4aba4a"/><rect x="1.300" y="5" width="2.400" height="4" fill="#4aba4a"/></svg>
<svg class="abs" style="left:737px;top:485px" width="10" height="11" viewBox="0 0 10 11"><rect x="2.500" y=".6" width="6.500" height="5" fill="#223" stroke="#eee" stroke-width=".8"/><rect x=".6" y="2.600" width="6.500" height="5" fill="#223" stroke="#eee" stroke-width=".8"/><path d="M4.500 6.500l3.500 3.500M8 6.500L4.500 10" stroke="#f01818" stroke-width="1.500"/></svg>
<svg class="abs" style="left:748px;top:485px" width="11" height="10" viewBox="0 0 11 10"><path d="M.8 3.500h2L5.500 1v8L2.800 6.500h-2z" fill="#e8e8e8" stroke="#999" stroke-width=".4"/><path d="M7 3c1 1 1 3 0 4M8.500 2c1.600 1.700 1.600 4.400 0 6" fill="none" stroke="#3ac03a" stroke-width=".8"/></svg>
<div class="tl" style="left:763.500px">6:12 PM</div>

</body></html>
